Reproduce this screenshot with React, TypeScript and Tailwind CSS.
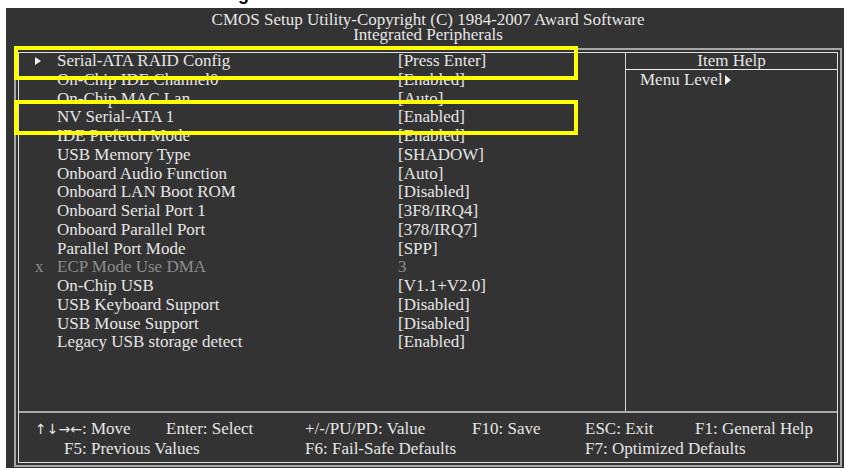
import React from "react";

const rows: { label: string; value: string; arrow?: boolean; disabled?: boolean }[] = [
  { label: "Serial-ATA RAID Config", value: "[Press Enter]", arrow: true },
  { label: "On-Chip IDE Channel0", value: "[Enabled]" },
  { label: "On-Chip MAC Lan", value: "[Auto]" },
  { label: "NV Serial-ATA 1", value: "[Enabled]" },
  { label: "IDE Prefetch Mode", value: "[Enabled]" },
  { label: "USB Memory Type", value: "[SHADOW]" },
  { label: "Onboard Audio Function", value: "[Auto]" },
  { label: "Onboard LAN Boot ROM", value: "[Disabled]" },
  { label: "Onboard Serial Port 1", value: "[3F8/IRQ4]" },
  { label: "Onboard Parallel Port", value: "[378/IRQ7]" },
  { label: "Parallel Port Mode", value: "[SPP]" },
  { label: "ECP Mode Use DMA", value: "3", disabled: true },
  { label: "On-Chip USB", value: "[V1.1+V2.0]" },
  { label: "USB Keyboard Support", value: "[Disabled]" },
  { label: "USB Mouse Support", value: "[Disabled]" },
  { label: "Legacy USB storage detect", value: "[Enabled]" },
];

function Tri({ w, h }: { w: number; h: number }) {
  return (
    <svg width={w} height={h} viewBox={`0 0 ${w} ${h}`} className="inline-block">
      <polygon points={`0,0 ${w},${h / 2} 0,${h}`} fill="#f0f0f0" />
    </svg>
  );
}

export default function App() {
  return (
    <div
      className="w-[844px] h-[468px] bg-white overflow-hidden relative text-[#e6e6e6]"
      style={{ fontFamily: '"Liberation Serif", "Times New Roman", serif' }}
    >
      <div className="h-[8px] overflow-hidden">
        <div
          className="mt-[-16px] pl-[238px] text-[18px] leading-[20px] font-bold text-black"
          style={{ fontFamily: '"Liberation Sans", Arial, sans-serif' }}
        >
          g
        </div>
      </div>
      <div className="ml-[6px] h-[460px] bg-[#333333] pl-[8px] pr-[2px] flex flex-col">
        <div className="h-[40px] pt-[4px] text-center text-[17px] leading-[15px]">
          <div>CMOS Setup Utility-Copyright (C) 1984-2007 Award Software</div>
          <div>Integrated Peripherals</div>
        </div>
        <div className="h-[419px] border-2 border-[#a8a8a8] p-[2px] flex">
          <div className="flex-1 border border-[#e0e0e0] flex flex-col">
            <div className="flex h-[358px]">
              <div className="w-[606px] text-[17px] leading-[18.75px]">
                <div className="mt-[-1px]">
                  {rows.map((r) => (
                    <div key={r.label} className={`flex h-[18.75px] ${r.disabled ? "text-[#8c8c8c]" : ""}`}>
                      <div className="w-[38px] pl-[16px] flex items-center">
                        {r.arrow ? <Tri w={6} h={8} /> : r.disabled ? <span>x</span> : null}
                      </div>
                      <div className="w-[341px] whitespace-nowrap">{r.label}</div>
                      <div className="whitespace-nowrap">{r.value}</div>
                    </div>
                  ))}
                </div>
              </div>
              <div className="flex-1 border-l border-[#d8d8d8] text-[17px]">
                <div className="h-[17px] border-b border-[#f0f0f0] text-center leading-[16px]">Item Help</div>
                <div className="pl-[14px] leading-[19px] flex items-center">
                  Menu Level
                  <span className="ml-[2px] flex items-center">
                    <Tri w={6} h={10} />
                  </span>
                </div>
              </div>
            </div>
            <div className="h-[2px] bg-[#a8a8a8]" />
            <div className="flex-1 pt-[6px] text-[17px] leading-[19px]">
              <div className="flex pl-[16px] whitespace-nowrap">
                <div className="w-[131px]">
                  <span
                    className="text-[14px]"
                    style={{ fontFamily: '"DejaVu Sans", sans-serif' }}
                  >
                    ↑↓→←
                  </span>
                  : Move
                </div>
                <div className="w-[139px]">Enter: Select</div>
                <div className="w-[167px]">+/-/PU/PD: Value</div>
                <div className="w-[113px]">F10: Save</div>
                <div className="w-[110px]">ESC: Exit</div>
                <div>F1: General Help</div>
              </div>
              <div className="flex pl-[16px] whitespace-nowrap">
                <div className="w-[270px] pl-[29px]">F5: Previous Values</div>
                <div className="w-[280px]">F6: Fail-Safe Defaults</div>
                <div>F7: Optimized Defaults</div>
              </div>
            </div>
          </div>
        </div>
      </div>
      <div className="absolute left-[14px] top-[46px] w-[564px] h-[34px] border-4 border-[#ffff00]" />
      <div className="absolute left-[14px] top-[100px] w-[564px] h-[35px] border-4 border-[#ffff00]" />
    </div>
  );
}
